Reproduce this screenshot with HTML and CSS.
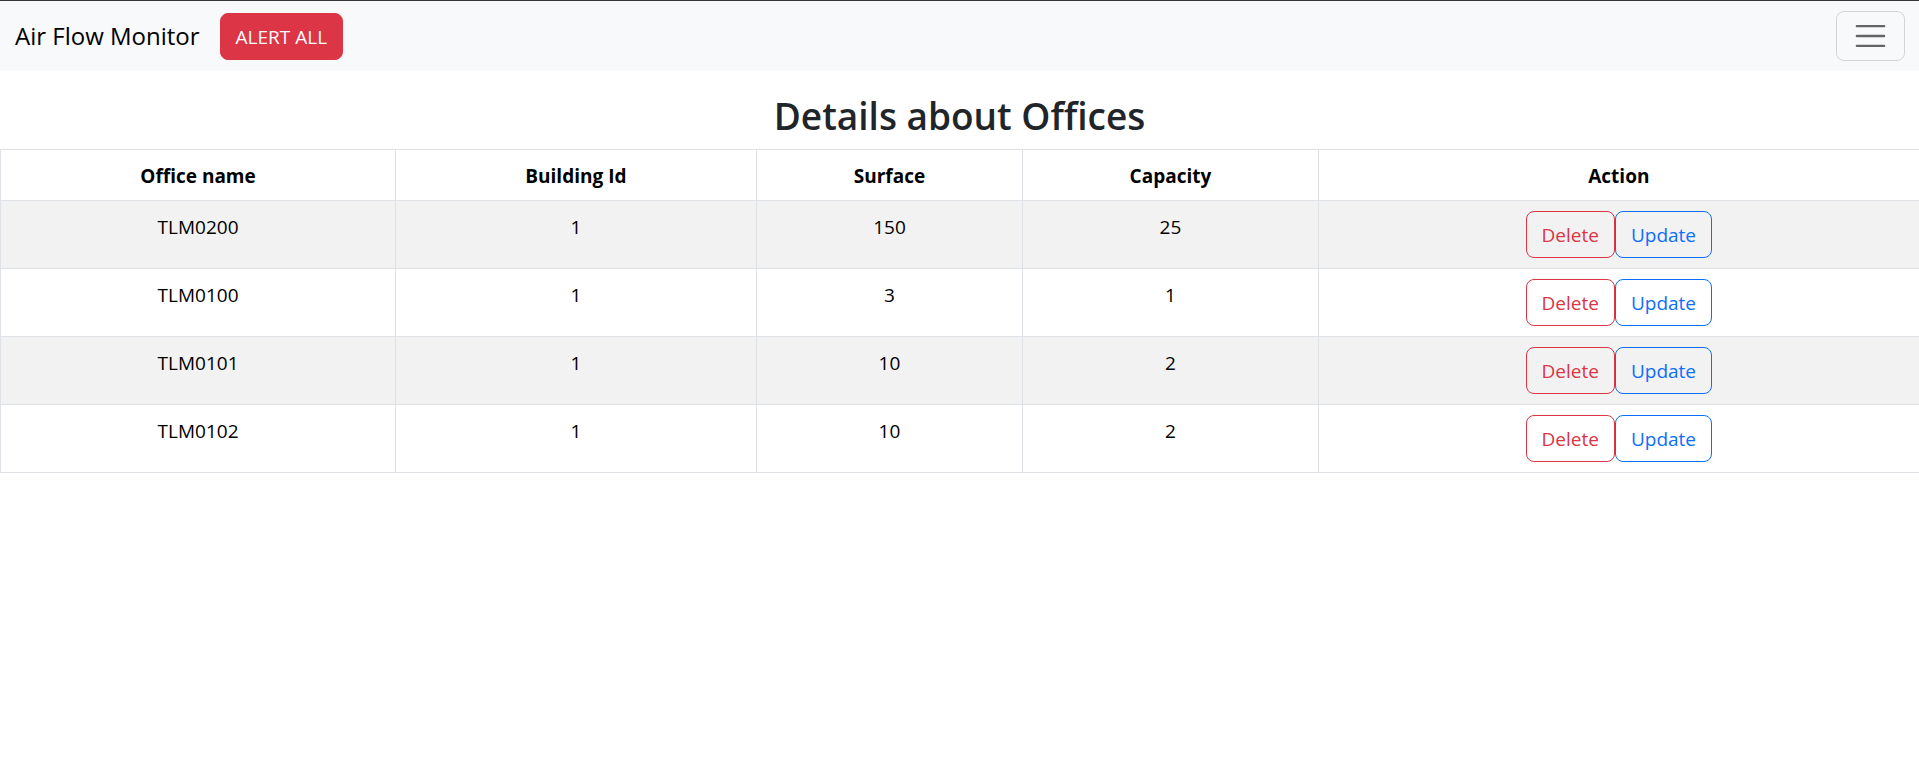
FILE: index.html
```html
<!DOCTYPE html>
<html lang="en">
<head>
<meta charset="utf-8">
<title>Air Flow Monitor</title>
<link rel="stylesheet" href="styles.css">
</head>
<body>
<nav class="navbar">
  <a class="navbar-brand" href="#">Air Flow Monitor</a>
  <button class="btn btn-danger" type="button">ALERT ALL</button>
  <button class="navbar-toggler" type="button" aria-label="Toggle navigation">
    <svg class="toggler-icon" viewBox="0 0 30 30" aria-hidden="true"><path d="M4 7h22M4 15h22M4 23h22" fill="none" stroke="currentColor" stroke-width="2" stroke-linecap="round" stroke-miterlimit="10"/></svg>
  </button>
</nav>
<main>
  <h2 class="title">Details about Offices</h2>
  <table class="table">
    <colgroup>
      <col class="col-name"><col class="col-building"><col class="col-surface"><col class="col-capacity"><col>
    </colgroup>
    <thead>
      <tr><th scope="col">Office name</th><th scope="col">Building Id</th><th scope="col">Surface</th><th scope="col">Capacity</th><th scope="col">Action</th></tr>
    </thead>
    <tbody>
      <tr><td>TLM0200</td><td>1</td><td>150</td><td>25</td><td class="action-cell"><div class="actions"><button class="btn btn-outline-danger" type="button">Delete</button><button class="btn btn-outline-primary" type="button">Update</button></div></td></tr>
      <tr><td>TLM0100</td><td>1</td><td>3</td><td>1</td><td class="action-cell"><div class="actions"><button class="btn btn-outline-danger" type="button">Delete</button><button class="btn btn-outline-primary" type="button">Update</button></div></td></tr>
      <tr><td>TLM0101</td><td>1</td><td>10</td><td>2</td><td class="action-cell"><div class="actions"><button class="btn btn-outline-danger" type="button">Delete</button><button class="btn btn-outline-primary" type="button">Update</button></div></td></tr>
      <tr><td>TLM0102</td><td>1</td><td>10</td><td>2</td><td class="action-cell"><div class="actions"><button class="btn btn-outline-danger" type="button">Delete</button><button class="btn btn-outline-primary" type="button">Update</button></div></td></tr>
    </tbody>
  </table>
</main>
</body>
</html>
```
FILE: styles.css
```css
* {
  box-sizing: border-box;
}

body {
  margin: 0;
  background: #fff;
  color: #212529;
  font-family: "Segoe UI", "Open Sans", "Noto Sans", sans-serif;
  font-size: 19px;
  line-height: 30px;
}

.navbar {
  display: flex;
  align-items: center;
  padding: 10px 14px 10px 15px;
  border-top: 1px solid #35363a;
  background: #f8f9fa;
}

.navbar-brand {
  margin-right: 20px;
  color: #000;
  font-size: 24px;
  line-height: 38px;
  text-decoration: none;
}

.btn {
  padding: 9px 15px 7px;
  border: 1px solid transparent;
  border-radius: 8px;
  background: transparent;
  font: inherit;
  line-height: 29px;
  cursor: pointer;
}

.btn-danger {
  border-color: #dc3545;
  background: #dc3545;
  color: #fff;
}

.btn-outline-danger {
  border-color: #dc3545;
  color: #dc3545;
}

.btn-outline-primary {
  border-color: #0d6efd;
  color: #0d6efd;
}

.navbar-toggler {
  display: flex;
  margin-left: auto;
  padding: 5px 15px;
  border: 1px solid rgba(0, 0, 0, 0.15);
  border-radius: 8px;
  background: transparent;
  color: rgba(0, 0, 0, 0.6);
  cursor: pointer;
}

.toggler-icon {
  width: 37px;
  height: 38px;
}

.title {
  margin: 21px 0 9px;
  font-size: 37px;
  font-weight: 600;
  line-height: 48px;
  text-align: center;
}

.table {
  width: 100%;
  border-top: 1px solid #dee2e6;
  border-left: 1px solid #dee2e6;
  border-spacing: 0;
  table-layout: fixed;
  color: #000;
  text-align: center;
}

.col-name {
  width: 20.6%;
}

.col-building {
  width: 18.8%;
}

.col-surface {
  width: 13.9%;
}

.col-capacity {
  width: 15.4%;
}

.table th,
.table td {
  padding: 11px 10px 9px;
  border-right: 1px solid #dee2e6;
  border-bottom: 1px solid #dee2e6;
  vertical-align: top;
}

.table .action-cell {
  padding: 10px;
}

.table th:last-child,
.table td:last-child {
  border-right: 0;
}

.table tbody tr:nth-child(odd) {
  background: #f2f2f2;
}

.actions {
  display: flex;
  justify-content: center;
}
```
